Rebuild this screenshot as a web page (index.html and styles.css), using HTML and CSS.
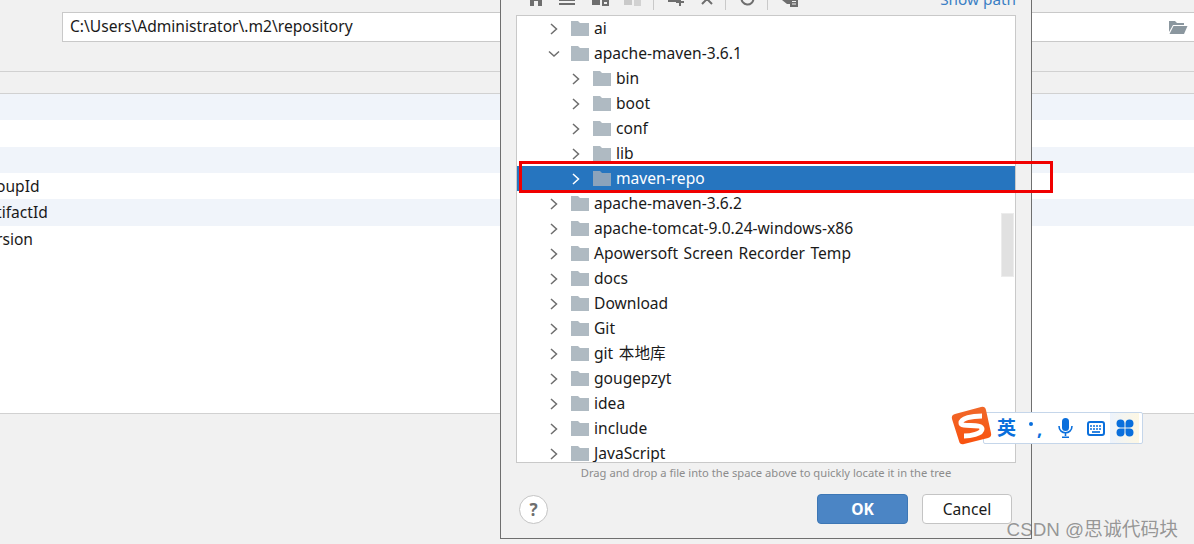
FILE: index.html
```html
<!DOCTYPE html>
<html lang="en">
<head>
    <meta charset="UTF-8">
    <title>Settings</title>
    <link rel="stylesheet" href="styles.css">
</head>
<body>
    <div class="repo-bar">
        <div class="path-input">
            <span>C:\Users\Administrator\.m2\repository</span>
            <svg class="open-icon" width="20" height="16" viewBox="0 0 20 16"><path fill="#8b979f" d="M1 2h6l2 2h7v2H5L1 13z"/><path fill="#8b979f" d="M5.500 7H19.500L16 15H1.500z"/></svg>
        </div>
    </div>
    <div class="section-head"></div>
    <div class="props">
        <div class="prop alt"></div>
        <div class="prop"></div>
        <div class="prop alt"></div>
        <div class="prop">oupId</div>
        <div class="prop alt">tifactId</div>
        <div class="prop">rsion</div>
    </div>

    <div class="dialog">
        <div class="toolbar">
            <div class="tools">
                <svg class="tool" width="12" height="16" viewBox="0 0 12 16"><path fill="#6e6e6e" d="M6 1 12 7V15H8V10H4V15H0V7z"/></svg>
                <svg class="tool" width="16" height="16" viewBox="0 0 16 16"><path fill="#6e6e6e" d="M0 4h16v2H0zM0 8h16v2H0zM0 12h16v2H0z"/></svg>
                <svg class="tool" width="17" height="16" viewBox="0 0 17 16"><path fill="#6e6e6e" d="M0 2h6l2 2h3v4H8v6H0z"/><path fill="#6e6e6e" d="M10 9h7v6h-7z"/><path fill="#f1f1f1" d="M12 11h3v2h-3z"/></svg>
                <svg class="tool" width="17" height="16" viewBox="0 0 17 16"><path fill="#c9c9c9" d="M0 2h6l2 2h3v4H8v6H0z"/><path fill="#d2d2d2" d="M10 8h7v7h-7z"/></svg>
                <i class="sep"></i>
                <svg class="tool" width="16" height="16" viewBox="0 0 16 16"><path fill="#6e6e6e" d="M0 2h6l2 2h6v4h-3v3H0z"/><path fill="#6e6e6e" d="M11 7h2v3h3v2h-3v3h-2v-3H8v-2h3z"/></svg>
                <svg class="tool" width="12" height="16" viewBox="0 0 12 16"><path stroke="#6e6e6e" stroke-width="2" d="M1 3 11 13M11 3 1 13"/></svg>
                <i class="sep"></i>
                <svg class="tool" width="15" height="16" viewBox="0 0 15 16"><path fill="none" stroke="#6e6e6e" stroke-width="2" d="M13.500 7.500A6 6 0 1 1 9 1.700"/></svg>
                <i class="sep"></i>
                <svg class="tool" width="16" height="16" viewBox="0 0 16 16"><path fill="#6e6e6e" d="M0 9h8v4H5z"/><path fill="#6e6e6e" d="M8 8h8v8H8z"/><path fill="#f1f1f1" d="M10 10h4v1h-4zM10 12.500h4v1h-4z"/></svg>
            </div>
            <span class="show-path">Show path</span>
        </div>

        <div class="tree">
            <div class="tree-row"><svg class="arrow" viewBox="0 0 10 12"><path d="M2 1 7.500 6 2 11"/></svg><svg class="folder" viewBox="0 0 18 15"><path d="M0 0h7l2 2h9v13H0z"/></svg><span>ai</span></div>
            <div class="tree-row"><svg class="arrow" viewBox="0 0 12 10"><path d="M1 2.500 6 7 11 2.500"/></svg><svg class="folder" viewBox="0 0 18 15"><path d="M0 0h7l2 2h9v13H0z"/></svg><span>apache-maven-3.6.1</span></div>
            <div class="tree-row child"><svg class="arrow" viewBox="0 0 10 12"><path d="M2 1 7.500 6 2 11"/></svg><svg class="folder" viewBox="0 0 18 15"><path d="M0 0h7l2 2h9v13H0z"/></svg><span>bin</span></div>
            <div class="tree-row child"><svg class="arrow" viewBox="0 0 10 12"><path d="M2 1 7.500 6 2 11"/></svg><svg class="folder" viewBox="0 0 18 15"><path d="M0 0h7l2 2h9v13H0z"/></svg><span>boot</span></div>
            <div class="tree-row child"><svg class="arrow" viewBox="0 0 10 12"><path d="M2 1 7.500 6 2 11"/></svg><svg class="folder" viewBox="0 0 18 15"><path d="M0 0h7l2 2h9v13H0z"/></svg><span>conf</span></div>
            <div class="tree-row child"><svg class="arrow" viewBox="0 0 10 12"><path d="M2 1 7.500 6 2 11"/></svg><svg class="folder" viewBox="0 0 18 15"><path d="M0 0h7l2 2h9v13H0z"/></svg><span>lib</span></div>
            <div class="tree-row child selected"><svg class="arrow" viewBox="0 0 10 12"><path d="M2 1 7.500 6 2 11"/></svg><svg class="folder" viewBox="0 0 18 15"><path d="M0 0h7l2 2h9v13H0z"/></svg><span>maven-repo</span></div>
            <div class="tree-row"><svg class="arrow" viewBox="0 0 10 12"><path d="M2 1 7.500 6 2 11"/></svg><svg class="folder" viewBox="0 0 18 15"><path d="M0 0h7l2 2h9v13H0z"/></svg><span>apache-maven-3.6.2</span></div>
            <div class="tree-row"><svg class="arrow" viewBox="0 0 10 12"><path d="M2 1 7.500 6 2 11"/></svg><svg class="folder" viewBox="0 0 18 15"><path d="M0 0h7l2 2h9v13H0z"/></svg><span>apache-tomcat-9.0.24-windows-x86</span></div>
            <div class="tree-row"><svg class="arrow" viewBox="0 0 10 12"><path d="M2 1 7.500 6 2 11"/></svg><svg class="folder" viewBox="0 0 18 15"><path d="M0 0h7l2 2h9v13H0z"/></svg><span>Apowersoft Screen Recorder Temp</span></div>
            <div class="tree-row"><svg class="arrow" viewBox="0 0 10 12"><path d="M2 1 7.500 6 2 11"/></svg><svg class="folder" viewBox="0 0 18 15"><path d="M0 0h7l2 2h9v13H0z"/></svg><span>docs</span></div>
            <div class="tree-row"><svg class="arrow" viewBox="0 0 10 12"><path d="M2 1 7.500 6 2 11"/></svg><svg class="folder" viewBox="0 0 18 15"><path d="M0 0h7l2 2h9v13H0z"/></svg><span>Download</span></div>
            <div class="tree-row"><svg class="arrow" viewBox="0 0 10 12"><path d="M2 1 7.500 6 2 11"/></svg><svg class="folder" viewBox="0 0 18 15"><path d="M0 0h7l2 2h9v13H0z"/></svg><span>Git</span></div>
            <div class="tree-row"><svg class="arrow" viewBox="0 0 10 12"><path d="M2 1 7.500 6 2 11"/></svg><svg class="folder" viewBox="0 0 18 15"><path d="M0 0h7l2 2h9v13H0z"/></svg><span>git 本地库</span></div>
            <div class="tree-row"><svg class="arrow" viewBox="0 0 10 12"><path d="M2 1 7.500 6 2 11"/></svg><svg class="folder" viewBox="0 0 18 15"><path d="M0 0h7l2 2h9v13H0z"/></svg><span>gougepzyt</span></div>
            <div class="tree-row"><svg class="arrow" viewBox="0 0 10 12"><path d="M2 1 7.500 6 2 11"/></svg><svg class="folder" viewBox="0 0 18 15"><path d="M0 0h7l2 2h9v13H0z"/></svg><span>idea</span></div>
            <div class="tree-row"><svg class="arrow" viewBox="0 0 10 12"><path d="M2 1 7.500 6 2 11"/></svg><svg class="folder" viewBox="0 0 18 15"><path d="M0 0h7l2 2h9v13H0z"/></svg><span>include</span></div>
            <div class="tree-row"><svg class="arrow" viewBox="0 0 10 12"><path d="M2 1 7.500 6 2 11"/></svg><svg class="folder" viewBox="0 0 18 15"><path d="M0 0h7l2 2h9v13H0z"/></svg><span>JavaScript</span></div>
            <div class="scroll-thumb"></div>
        </div>

        <div class="hint">Drag and drop a file into the space above to quickly locate it in the tree</div>

        <div class="dialog-foot">
            <div class="help">?</div>
            <div class="buttons">
                <div class="btn primary">OK</div>
                <div class="btn">Cancel</div>
            </div>
        </div>
    </div>

    <div class="red-box"></div>

    <div class="ime">
        <svg class="ime-logo" width="42" height="40" viewBox="0 0 42 40"><defs><linearGradient id="sogou" x1="0" y1="0" x2="0" y2="1"><stop offset="0" stop-color="#f0682a"/><stop offset="1" stop-color="#f9520f"/></linearGradient></defs><path fill="url(#sogou)" d="M4 8 30 1Q34 0 35 4L40 27Q41 31 37 32L13 38Q9 39 8 35L1 13Q0 9 4 8z"/><path fill="none" stroke="#fff" stroke-width="5" d="M31 10C21 10 10 12 10 17 10 22 31 17 31 23 31 28 19 30 13 30"/></svg>
        <span class="ime-lang">英</span>
        <span class="ime-punc"><i class="dot"></i><i class="comma">,</i></span>
        <svg class="ime-mic" width="15" height="20" viewBox="0 0 15 20"><rect x="4" y="0" width="7" height="13" rx="3.500" fill="#0a6fdc"/><path fill="none" stroke="#0a6fdc" stroke-width="1.600" d="M1 8C1 17 14 17 14 8M7.500 15v3M4 19.200h7"/></svg>
        <svg class="ime-keys" width="18" height="15" viewBox="0 0 18 15"><rect x="1" y="1" width="16" height="13" rx="2" fill="none" stroke="#0a6fdc" stroke-width="2"/><path stroke="#0a6fdc" stroke-width="1.700" stroke-dasharray="2 1" d="M3 5h12M3 8h12"/><path stroke="#0a6fdc" stroke-width="1.700" d="M5 11h8"/></svg>
        <div class="ime-apps">
            <svg width="18" height="18" viewBox="0 0 18 18"><path fill="#0a6fdc" d="M4.500 0.500A4 4 0 0 1 8.500 4.500V8.500H4.500A4 4 0 0 1 4.500 0.500zM13.500 0.500A4 4 0 0 1 13.500 8.500H9.500V4.500A4 4 0 0 1 13.500 0.500zM4.500 9.500H8.500V13.500A4 4 0 1 1 4.500 9.500zM9.500 9.500H13.500A4 4 0 1 1 9.500 13.500z"/></svg>
        </div>
    </div>

    <div class="watermark">CSDN @思诚代码块</div>
</body>
</html>
```

FILE: styles.css
```css
* {
    box-sizing: border-box;
}
body {
    margin: 0;
    width: 1194px;
    height: 544px;
    overflow: hidden;
    position: relative;
    background: #f1f1f1;
    font-family: "Noto Sans", "Noto Sans CJK SC", sans-serif;
    font-size: 15.6px;
    color: #1a1a1a;
}
.repo-bar {
    height: 71px;
    padding: 12px 0 0 62px;
}
.path-input {
    height: 30px;
    background: #fff;
    border: 1px solid #c9c9c9;
    border-right: none;
    padding: 0 6px 0 7px;
    display: flex;
    align-items: center;
    justify-content: space-between;
}
.path-input span {
    margin-top: -2px;
}
.section-head {
    height: 23px;
    border-top: 1px solid #d1d1d1;
    border-bottom: 1px solid #d1d1d1;
}
.props {
    height: 320px;
    padding-top: 0.2px;
    background: #fff;
    border-bottom: 1px solid #d1d1d1;
}
.prop {
    height: 26.300px;
    line-height: 26px;
    white-space: nowrap;
    text-indent: -4px;
}
.prop.alt {
    background: #f0f4fa;
}
.dialog {
    position: absolute;
    left: 500px;
    top: -20px;
    width: 532px;
    height: 559px;
    background: #f1f1f1;
    border: 1px solid #6f6f6f;
    border-top: none;
    padding: 0 15px;
    display: flex;
    flex-direction: column;
}
.toolbar {
    height: 35px;
    display: flex;
    justify-content: space-between;
    align-items: flex-end;
    padding-bottom: 8px;
}
.tools {
    display: flex;
    align-items: flex-end;
    padding-left: 14px;
}
.tool {
    display: block;
    margin-left: 14px;
}
.tool:first-child {
    margin-left: 0;
}
.tool:nth-child(2) {
    margin-left: 17px;
}
.tool:nth-child(3) {
    margin-left: 17px;
}
.tool:nth-child(4) {
    margin-left: 15px;
}
.tool:nth-child(7) {
    margin-left: 17px;
}
.sep {
    width: 1px;
    height: 24px;
    margin: 0 0 -3px 12px;
    background: #c9c9c9;
}
.sep + .tool {
    margin-left: 14px;
}
.show-path {
    color: #3b7fc4;
    font-size: 15.300px;
    line-height: 18px;
    margin-bottom: -1px;
}
.tree {
    height: 448px;
    background: #fff;
    border: 1px solid #c9c9c9;
    overflow: hidden;
    position: relative;
}
.tree-row {
    height: 25px;
    display: flex;
    align-items: center;
    padding-left: 31px;
    white-space: nowrap;
    word-spacing: 1.5px;
}
.tree-row.child {
    padding-left: 53px;
}
.tree-row span {
    margin-top: -2px;
}
.tree-row.selected {
    background: #2675bf;
    color: #fff;
}
.arrow {
    width: 12px;
    height: 12px;
    flex: none;
    margin-right: 11px;
}
.arrow path {
    fill: none;
    stroke: #6e6e6e;
    stroke-width: 1.500;
}
.selected .arrow path {
    stroke: #fff;
}
.folder {
    width: 18px;
    height: 15px;
    flex: none;
    margin-right: 5px;
    fill: #afbac2;
}
.selected .folder {
    fill: #8ba3bb;
}
.scroll-thumb {
    position: absolute;
    right: 1px;
    top: 197px;
    width: 13px;
    height: 64px;
    background: #e1e1e1;
    border: 1px solid #ececec;
}
.hint {
    font-size: 11.200px;
    color: #8c8c8c;
    text-align: center;
    height: 20px;
    line-height: 20px;
}
.dialog-foot {
    display: flex;
    justify-content: space-between;
    align-items: center;
    padding: 11px 4px 0 3px;
}
.help {
    width: 29px;
    height: 29px;
    border-radius: 50%;
    border: 1px solid #c4c4c4;
    background: #fff;
    color: #6e6e6e;
    font-weight: bold;
    font-size: 17px;
    line-height: 27px;
    text-align: center;
}
.buttons {
    display: flex;
    gap: 14px;
}
.btn {
    width: 90px;
    height: 30px;
    border-radius: 4px;
    border: 1px solid #c4c4c4;
    background: #fff;
    line-height: 28px;
    text-align: center;
}
.btn.primary {
    width: 91px;
    background: #4b85c5;
    border-color: #3d77b5;
    color: #fff;
    font-weight: bold;
}
.red-box {
    position: absolute;
    left: 519px;
    top: 161px;
    width: 534px;
    height: 32px;
    border: 3px solid #f00000;
}
.ime {
    position: absolute;
    left: 983px;
    top: 412px;
    width: 160px;
    height: 32px;
    background: #fff;
    border: 1px solid #c5d6ea;
    border-radius: 2px;
    display: flex;
    align-items: center;
    padding-left: 13px;
}
.ime-logo {
    position: absolute;
    left: -33px;
    top: -7px;
}
.ime-lang {
    color: #0a6fdc;
    font-size: 19px;
    font-weight: bold;
    line-height: 1;
}
.ime-punc {
    position: relative;
    width: 15px;
    height: 16px;
    margin-left: 13px;
    color: #0a6fdc;
}
.dot {
    position: absolute;
    left: 0;
    top: 2px;
    width: 4px;
    height: 4px;
    border-radius: 50%;
    background: #0a6fdc;
}
.comma {
    position: absolute;
    left: 8px;
    top: -3px;
    font-style: normal;
    font-weight: bold;
    font-size: 18px;
}
.ime-mic {
    margin-left: 14px;
}
.ime-keys {
    margin-left: 14px;
}
.ime-apps {
    margin-left: 5px;
    width: 29px;
    height: 30px;
    display: flex;
    align-items: center;
    justify-content: center;
    background: linear-gradient(90deg, #edf3fc, #fdf7e3);
}
.watermark {
    position: absolute;
    right: 16px;
    top: 514px;
    font-size: 18.800px;
    color: rgba(90, 90, 90, 0.62);
    font-family: "Liberation Sans", "Noto Sans CJK SC", sans-serif;
}
```
